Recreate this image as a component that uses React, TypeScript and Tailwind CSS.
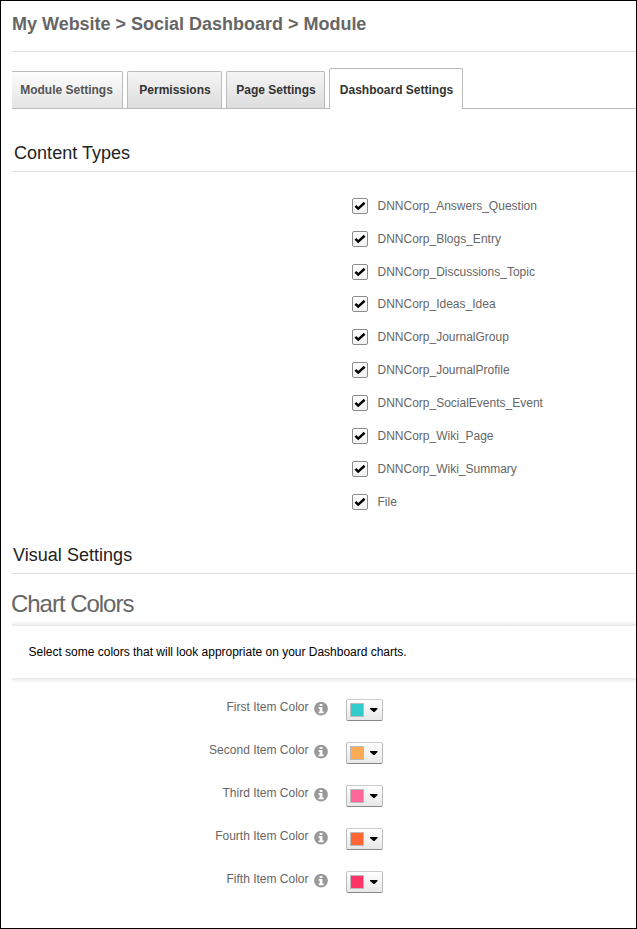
const tabs = [
  { label: "Module Settings", cls: "w-[111px] h-[37px] border-t border-r border-[#bbb] bg-gradient-to-b from-[#fdfdfd] to-[#e4e4e4] text-[#555] rounded-tr-[2px] pr-px" },
  { label: "Permissions", cls: "w-[95px] h-[37px] border border-b-0 border-[#bbb] bg-gradient-to-b from-[#f5f5f5] to-[#dddddd] text-[#333] rounded-t-[2px] pl-px" },
  { label: "Page Settings", cls: "w-[99px] h-[37px] border border-b-0 border-[#bbb] bg-gradient-to-b from-[#f5f5f5] to-[#dddddd] text-[#333] rounded-t-[2px] pl-px" },
  { label: "Dashboard Settings", cls: "-mb-px w-[134px] h-[41px] border border-b-0 border-[#bbb] bg-white text-[#333] rounded-t-[2px] pt-px pl-px" },
];

const types = [
  { label: "DNNCorp_Answers_Question", h: "h-[33px]" },
  { label: "DNNCorp_Blogs_Entry", h: "h-[33px]" },
  { label: "DNNCorp_Discussions_Topic", h: "h-[32px]" },
  { label: "DNNCorp_Ideas_Idea", h: "h-[33px]" },
  { label: "DNNCorp_JournalGroup", h: "h-[33px]" },
  { label: "DNNCorp_JournalProfile", h: "h-[33px]" },
  { label: "DNNCorp_SocialEvents_Event", h: "h-[33px]" },
  { label: "DNNCorp_Wiki_Page", h: "h-[33px]" },
  { label: "DNNCorp_Wiki_Summary", h: "h-[33px]" },
  { label: "File", h: "h-[33px]" },
];

const colors = [
  { label: "First Item Color", bg: "bg-[#33cccc]" },
  { label: "Second Item Color", bg: "bg-[#ffaa55]" },
  { label: "Third Item Color", bg: "bg-[#ff6699]" },
  { label: "Fourth Item Color", bg: "bg-[#ff6633]" },
  { label: "Fifth Item Color", bg: "bg-[#ff3366]" },
];

function Checkbox() {
  return (
    <span className="flex h-4 w-4 shrink-0 items-center justify-center rounded-[2px] border border-[#8c8c8c] bg-gradient-to-b from-white to-[#f2f2f2]">
      <svg width="14" height="14" viewBox="0 0 14 14">
        <path d="M2.4 6.8 5.2 9.6 11.6 3.8" fill="none" stroke="#000" strokeWidth="2.5" />
      </svg>
    </span>
  );
}

function Info() {
  return (
    <svg width="14" height="14" viewBox="0 0 14 14">
      <circle cx="7" cy="6.7" r="6.9" fill="#999" />
      <path d="M5.6 2h2.8v2.1H5.6zM4.6 5h3.8v4.4h1.2v1.8H4.6V9.4h1.1V6.7H4.6z" fill="#fff" />
    </svg>
  );
}

export default function App() {
  return (
    <div className="flex h-[929px] w-[637px] flex-col overflow-hidden border border-black bg-white pl-[11px] font-['Liberation_Sans',Arial,sans-serif] text-xs text-[#666]">
      <h1 className="h-[51px] shrink-0 whitespace-nowrap border-b border-[#ddd] pt-[11px] text-[18px] font-bold leading-6 tracking-[-0.01px]">
        My Website &gt; Social Dashboard &gt; Module
      </h1>
      <div className="mt-4 flex h-[41px] shrink-0 items-end gap-1 border-b border-[#bbb]">
        {tabs.map((t) => (
          <div key={t.label} className={`flex shrink-0 items-center justify-center whitespace-nowrap font-bold ${t.cls}`}>
            {t.label}
          </div>
        ))}
      </div>
      <h2 className="h-[63px] shrink-0 border-b border-[#ddd] pl-0.5 pt-8 text-[18px] leading-6 tracking-[0.03px] text-[#222]">Content Types</h2>
      <div className="mt-[26px] h-[343px] shrink-0 pl-[340px]">
        {types.map((t) => (
          <div key={t.label} className={`flex items-start gap-[9.5px] ${t.h}`}>
            <Checkbox />
            <span className="whitespace-nowrap leading-4">{t.label}</span>
          </div>
        ))}
      </div>
      <h2 className="h-[33px] shrink-0 border-b border-[#ddd] pl-px pt-0.5 text-[18px] leading-6 tracking-[0.03px] text-[#222]">Visual Settings</h2>
      <h3 className="h-[47px] shrink-0 pt-4 text-[24px] leading-7 tracking-[-1.03px]">
        <span className="-ml-px">Chart Colors</span>
      </h3>
      <div className="h-[5px] shrink-0 bg-gradient-to-b from-white to-[#e8e8e8]" />
      <p className="h-[52px] shrink-0 pl-[16.5px] pt-[18px] leading-4 tracking-[-0.01px] text-black">
        Select some colors that will look appropriate on your Dashboard charts.
      </p>
      <div className="h-[5px] shrink-0 bg-gradient-to-b from-[#e8e8e8] to-white" />
      <div className="pt-4">
        {colors.map((c) => (
          <div key={c.label} className="flex h-[43px] items-start">
            <span className="w-[297px] whitespace-nowrap pr-[0.5px] text-right leading-4">{c.label}</span>
            <span className="ml-[5px] mt-[3px]"><Info /></span>
            <span className="ml-[18px] flex h-[22px] w-[37px] items-center rounded-[2px] border border-[#bbb] border-t-[#ccc] border-b-[#888] bg-gradient-to-b from-white to-[#e8e8e8] pl-[3px]">
              <span className={`h-[14px] w-[14px] border border-[#bbb] ${c.bg}`} />
              <svg className="ml-[6px]" width="8" height="4" viewBox="0 0 8 4">
                <path d="M0 0h7.5v1L4.5 4h-1L0 1z" fill="#000" />
              </svg>
            </span>
          </div>
        ))}
      </div>
    </div>
  );
}
